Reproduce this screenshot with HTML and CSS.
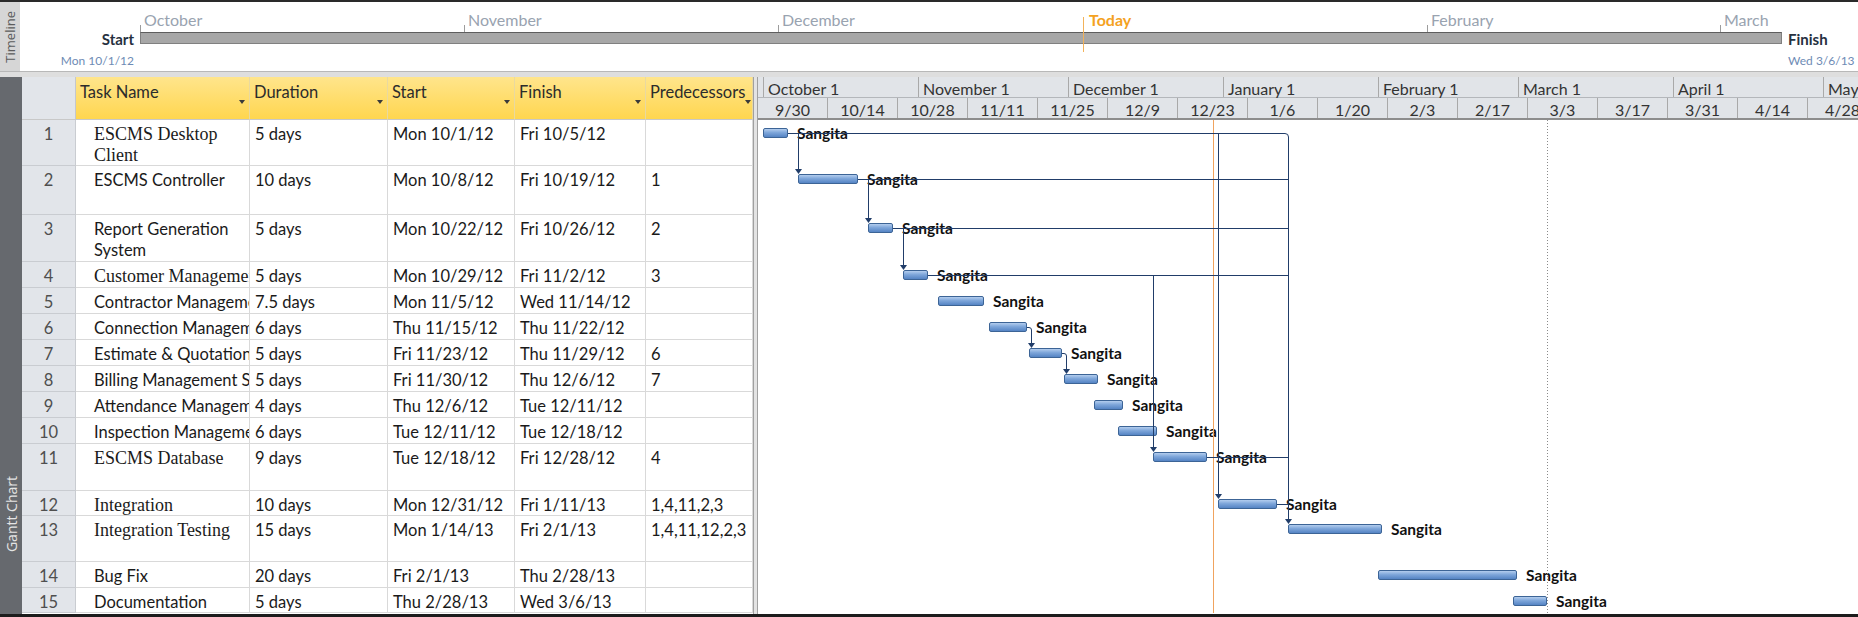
FILE: index.html
```html
<!DOCTYPE html>
<html>
<head>
<meta charset="utf-8">
<title>Gantt Chart</title>
<link rel="stylesheet" href="styles.css">
</head>
<body>
<div class="app">
  <div class="timeline">
    <div class="tl-side"><span>Timeline</span></div>
    <div class="tl-body">
      <div class="tl-start">
        <div class="tl-cap">Start</div>
        <div class="tl-date">Mon 10/1/12</div>
      </div>
      <div class="tl-track">
        <div class="tl-months">
          <span class="mlabel" style="left:0px">October</span>
          <span class="mlabel" style="left:324px">November</span>
          <span class="mlabel" style="left:638px">December</span>
          <span class="mlabel today" style="left:943px">Today</span>
          <span class="mlabel" style="left:1287px">February</span>
          <span class="mlabel" style="left:1580px">March</span>
        </div>
        <div class="tl-bar"></div>
      </div>
      <div class="tl-end">
        <div class="tl-cap">Finish</div>
        <div class="tl-date">Wed 3/6/13</div>
      </div>
    </div>
  </div>
  <div class="band"></div>
  <div class="gantt">
    <div class="g-side"><span>Gantt Chart</span></div>
    <div class="table">
      <div class="trow thead">
        <div class="hc id"></div>
        <div class="hc"><span>Task Name</span><i class="dd"></i></div>
        <div class="hc"><span>Duration</span><i class="dd"></i></div>
        <div class="hc"><span>Start</span><i class="dd"></i></div>
        <div class="hc"><span>Finish</span><i class="dd"></i></div>
        <div class="hc"><span>Predecessors</span><i class="dd"></i></div>
      </div>
      <div class="trow h46"><div class="c id">1</div><div class="c name serif wrap">ESCMS Desktop Client</div><div class="c">5 days</div><div class="c">Mon 10/1/12</div><div class="c">Fri 10/5/12</div><div class="c"></div></div>
      <div class="trow h49"><div class="c id">2</div><div class="c name wrap">ESCMS Controller</div><div class="c">10 days</div><div class="c">Mon 10/8/12</div><div class="c">Fri 10/19/12</div><div class="c">1</div></div>
      <div class="trow h47"><div class="c id">3</div><div class="c name wrap">Report Generation System</div><div class="c">5 days</div><div class="c">Mon 10/22/12</div><div class="c">Fri 10/26/12</div><div class="c">2</div></div>
      <div class="trow h26"><div class="c id">4</div><div class="c name serif">Customer Management System</div><div class="c">5 days</div><div class="c">Mon 10/29/12</div><div class="c">Fri 11/2/12</div><div class="c">3</div></div>
      <div class="trow h26"><div class="c id">5</div><div class="c name">Contractor Management System</div><div class="c">7.5 days</div><div class="c">Mon 11/5/12</div><div class="c">Wed 11/14/12</div><div class="c"></div></div>
      <div class="trow h26"><div class="c id">6</div><div class="c name">Connection Management System</div><div class="c">6 days</div><div class="c">Thu 11/15/12</div><div class="c">Thu 11/22/12</div><div class="c"></div></div>
      <div class="trow h26"><div class="c id">7</div><div class="c name">Estimate &amp; Quotation System</div><div class="c">5 days</div><div class="c">Fri 11/23/12</div><div class="c">Thu 11/29/12</div><div class="c">6</div></div>
      <div class="trow h26"><div class="c id">8</div><div class="c name">Billing Management System</div><div class="c">5 days</div><div class="c">Fri 11/30/12</div><div class="c">Thu 12/6/12</div><div class="c">7</div></div>
      <div class="trow h26"><div class="c id">9</div><div class="c name">Attendance Management System</div><div class="c">4 days</div><div class="c">Thu 12/6/12</div><div class="c">Tue 12/11/12</div><div class="c"></div></div>
      <div class="trow h26"><div class="c id">10</div><div class="c name">Inspection Management System</div><div class="c">6 days</div><div class="c">Tue 12/11/12</div><div class="c">Tue 12/18/12</div><div class="c"></div></div>
      <div class="trow h47"><div class="c id">11</div><div class="c name serif">ESCMS Database</div><div class="c">9 days</div><div class="c">Tue 12/18/12</div><div class="c">Fri 12/28/12</div><div class="c">4</div></div>
      <div class="trow h25"><div class="c id">12</div><div class="c name serif">Integration</div><div class="c">10 days</div><div class="c">Mon 12/31/12</div><div class="c">Fri 1/11/13</div><div class="c">1,4,11,2,3</div></div>
      <div class="trow h46"><div class="c id">13</div><div class="c name serif">Integration Testing</div><div class="c">15 days</div><div class="c">Mon 1/14/13</div><div class="c">Fri 2/1/13</div><div class="c">1,4,11,12,2,3</div></div>
      <div class="trow h26"><div class="c id">14</div><div class="c name">Bug Fix</div><div class="c">20 days</div><div class="c">Fri 2/1/13</div><div class="c">Thu 2/28/13</div><div class="c"></div></div>
      <div class="trow h25"><div class="c id">15</div><div class="c name">Documentation</div><div class="c">5 days</div><div class="c">Thu 2/28/13</div><div class="c">Wed 3/6/13</div><div class="c"></div></div>
    </div>
    <div class="divider"></div>
    <div class="chart">
      <div class="tier1">
        <div class="t1 pre"></div>
        <div class="t1 d31">October 1</div>
        <div class="t1 d30">November 1</div>
        <div class="t1 d31">December 1</div>
        <div class="t1 d31">January 1</div>
        <div class="t1 d28">February 1</div>
        <div class="t1 d31">March 1</div>
        <div class="t1 d30">April 1</div>
        <div class="t1 d31">May 1</div>
      </div>
      <div class="tier2">
        <div class="t2">9/30</div><div class="t2">10/14</div><div class="t2">10/28</div><div class="t2">11/11</div>
        <div class="t2">11/25</div><div class="t2">12/9</div><div class="t2">12/23</div><div class="t2">1/6</div>
        <div class="t2">1/20</div><div class="t2">2/3</div><div class="t2">2/17</div><div class="t2">3/3</div>
        <div class="t2">3/17</div><div class="t2">3/31</div><div class="t2">4/14</div><div class="t2">4/28</div>
      </div>
      <div class="ch-body">
        <div class="crow h46"><div class="bar" style="margin-left:5px;width:25px"></div><span class="lbl">Sangita</span></div>
        <div class="crow h49"><div class="bar" style="margin-left:40px;width:60px"></div><span class="lbl">Sangita</span></div>
        <div class="crow h47"><div class="bar" style="margin-left:110px;width:25px"></div><span class="lbl">Sangita</span></div>
        <div class="crow h26"><div class="bar" style="margin-left:145px;width:25px"></div><span class="lbl">Sangita</span></div>
        <div class="crow h26"><div class="bar" style="margin-left:180px;width:46px"></div><span class="lbl">Sangita</span></div>
        <div class="crow h26"><div class="bar" style="margin-left:231px;width:38px"></div><span class="lbl">Sangita</span></div>
        <div class="crow h26"><div class="bar" style="margin-left:271px;width:33px"></div><span class="lbl">Sangita</span></div>
        <div class="crow h26"><div class="bar" style="margin-left:306px;width:34px"></div><span class="lbl">Sangita</span></div>
        <div class="crow h26"><div class="bar" style="margin-left:336px;width:29px"></div><span class="lbl">Sangita</span></div>
        <div class="crow h26"><div class="bar" style="margin-left:360px;width:39px"></div><span class="lbl">Sangita</span></div>
        <div class="crow h47"><div class="bar" style="margin-left:395px;width:54px"></div><span class="lbl">Sangita</span></div>
        <div class="crow h25"><div class="bar" style="margin-left:460px;width:59px"></div><span class="lbl">Sangita</span></div>
        <div class="crow h46"><div class="bar" style="margin-left:530px;width:94px"></div><span class="lbl">Sangita</span></div>
        <div class="crow h26"><div class="bar" style="margin-left:620px;width:139px"></div><span class="lbl">Sangita</span></div>
        <div class="crow h25"><div class="bar" style="margin-left:755px;width:34px"></div><span class="lbl">Sangita</span></div>
        <svg class="links" width="1100" height="493" viewBox="0 0 1100 493">
          <line class="today" x1="455.5" y1="0" x2="455.5" y2="493"/>
          <line class="finish" x1="789.5" y1="0" x2="789.5" y2="493"/>
          <g class="lk">
            <path d="M30 13.5 H527 Q530.5 13.5 530.5 17 V399"/>
            <path d="M40.5 13.5 V49"/>
            <path d="M100 59.5 H530.5"/>
            <path d="M110.5 59.5 V98"/>
            <path d="M135 108.5 H530.5"/>
            <path d="M145.5 108.5 V145"/>
            <path d="M170 155.5 H530.5"/>
            <path d="M395.5 155.5 V327"/>
            <path d="M460.5 13.5 V374"/>
            <path d="M269 207.5 H271 Q273.5 207.5 273.5 210 V223"/>
            <path d="M304 233.5 H306 Q308.5 233.5 308.5 236 V249"/>
            <path d="M449 337.5 H530.5"/>
            <path d="M519 384.5 H530.5"/>
          </g>
          <g class="ah">
            <polygon points="37,49 44,49 40.5,54"/>
            <polygon points="107,98 114,98 110.5,103"/>
            <polygon points="142,145 149,145 145.5,150"/>
            <polygon points="392,327 399,327 395.5,332"/>
            <polygon points="270,223 277,223 273.5,228"/>
            <polygon points="305,249 312,249 308.5,254"/>
            <polygon points="457,374 464,374 460.5,379"/>
            <polygon points="527,399 534,399 530.5,404"/>
          </g>
        </svg>
      </div>
    </div>
  </div>
</div>
</body>
</html>
```

FILE: styles.css
```css
* { box-sizing: border-box; margin: 0; padding: 0; }
html, body { width: 1858px; height: 617px; overflow: hidden; background: #fff; }
body { font-family: Lato, "Liberation Sans", sans-serif; color: #1e1e1e; }

.app { display: flex; flex-direction: column; width: 1858px; height: 617px; }

/* ---------- Timeline ---------- */
.timeline {
  height: 72px; display: flex; flex: none;
  border-top: 2px solid #2a2a2a; border-bottom: 1px solid #b8b8b8;
}
.tl-side {
  width: 20px; background: #d6d6d6; display: flex;
  align-items: center; justify-content: center;
}
.tl-side span {
  writing-mode: vertical-rl; transform: rotate(180deg);
  font-family: "Open Sans", sans-serif; font-size: 13px; color: #5c5c5c;
}
.tl-body { flex: 1; display: flex; }
.tl-start {
  width: 114px; display: flex; flex-direction: column; align-items: flex-end;
  padding-top: 28px;
}
.tl-end { margin-left: 6px; display: flex; flex-direction: column; align-items: flex-start; padding-top: 28px; }
.tl-cap { font-size: 15px; font-weight: 700; line-height: 18px; color: #26313f; }
.tl-date { font-size: 12px; line-height: 16px; margin-top: 5px; color: #6e8bb5; }
.tl-track { width: 1642px; margin-left: 6px; display: flex; flex-direction: column; }
.tl-months { height: 30px; position: relative; }
.mlabel {
  position: absolute; top: 8px; padding-left: 4px; font-size: 16px; line-height: 20px;
  color: #99a3b0; white-space: nowrap;
}
.mlabel::before {
  content: ""; position: absolute; left: 0; top: 15px; width: 1px; height: 7px; background: #9c9c9c;
}
.mlabel.today { color: #f4a21f; font-weight: 700; padding-left: 6px; }
.mlabel.today::before { top: 7px; height: 35px; background: #f2b25a; }
.tl-bar {
  height: 12px; background: #a7a7a7;
  border: 1px solid #808080; border-top-color: #5e5e5e;
}

.band { height: 5px; flex: none; background: #dedede; }

/* ---------- Gantt ---------- */
.gantt { flex: 1; display: flex; border-bottom: 3px solid #1c1c1c; overflow: hidden; }
.g-side {
  width: 22px; flex: none; background: #66696e; display: flex; flex-direction: column;
  justify-content: flex-end; align-items: center; padding-bottom: 62px;
}
.g-side span {
  writing-mode: vertical-rl; transform: rotate(180deg);
  font-family: "Open Sans", sans-serif; font-size: 14px; color: #e4e4e4;
}

.table { width: 731px; flex: none; display: flex; flex-direction: column; }
.trow { display: grid; grid-template-columns: 54px 174px 138px 127px 131px 107px; }
.thead { height: 43px; }
.h46 { height: 46px; }
.h49 { height: 49px; }
.h47 { height: 47px; }
.h26 { height: 26px; }
.h25 { height: 25px; }

.hc {
  background: linear-gradient(#ffe58c, #ffd64f);
  border-right: 1px solid #e9d9a0; border-bottom: 1px solid #c8c8c8;
  display: flex; justify-content: space-between; align-items: flex-start;
  padding: 5px 4px 0 4px; font-size: 16.5px; line-height: 20px; color: #2c2c2c;
}
.hc.id { background: #e2e5ea; border-right: 1px solid #c4c7cc; }
.dd {
  align-self: center; width: 0; height: 0; margin-top: 3px; flex: none;
  border-left: 3px solid transparent; border-right: 3px solid transparent;
  border-top: 4px solid #3a3a3a;
}
.c {
  border-right: 1px solid #d9d9d9; border-bottom: 1px solid #d9d9d9;
  padding: 4px 4px 0 5px; font-size: 16.5px; line-height: 21px;
  overflow: hidden; white-space: nowrap; text-overflow: clip; color: #1a1a1a;
}
.c.id { background: #e2e5ea; text-align: center; color: #4f4f4f; border-color: #c9ccd1; padding-left: 4px; }
.c.name { padding-left: 18px; }
.c.wrap { white-space: normal; }
.c.serif { font-family: "Liberation Serif", serif; font-size: 18px; }

.divider {
  width: 5px; flex: none; background: #e3e3e3;
  border-left: 1px solid #a0a0a0; border-right: 1px solid #a0a0a0;
}

.chart { width: 1100px; flex: none; display: flex; flex-direction: column; overflow: hidden; }
.tier1, .tier2 { display: flex; background: #e1e4e8; flex: none; }
.tier1 { height: 21px; border-bottom: 1px solid #b4b7bb; }
.tier2 { height: 22px; border-bottom: 2px solid #8d8d8d; }
.t1 {
  flex: none; border-left: 1px solid #a9a9a9; padding-left: 4px;
  font-size: 16px; line-height: 23px; color: #333; white-space: nowrap;
}
.t1.pre { width: 5px; border-left: none; padding: 0; }
.d31 { width: 155px; }
.d30 { width: 150px; }
.d28 { width: 140px; }
.t2 {
  flex: none; width: 70px; border-right: 1px solid #a9a9a9; text-align: center;
  font-size: 16px; line-height: 23px; color: #333; white-space: nowrap;
}

.ch-body { position: relative; flex: 1; }
.crow { display: flex; align-items: flex-start; padding-top: 8px; }
.bar {
  flex: none; height: 10px; border: 1px solid #3c6496; border-radius: 2px;
  background: linear-gradient(#b3cdee, #7ea6da 45%, #5584c4);
}
.lbl {
  margin-left: 9px; font-size: 15.5px; font-weight: 700; line-height: 10px;
  color: #111; white-space: nowrap;
}
.links { position: absolute; left: 0; top: 0; pointer-events: none; }
.links .today { stroke: #f0a35e; stroke-width: 1; }
.links .finish { stroke: #8a8a8a; stroke-width: 1; stroke-dasharray: 1 2; }
.links .lk path { fill: none; stroke: #213d69; stroke-width: 1; }
.links .ah polygon { fill: #213d69; }
```
